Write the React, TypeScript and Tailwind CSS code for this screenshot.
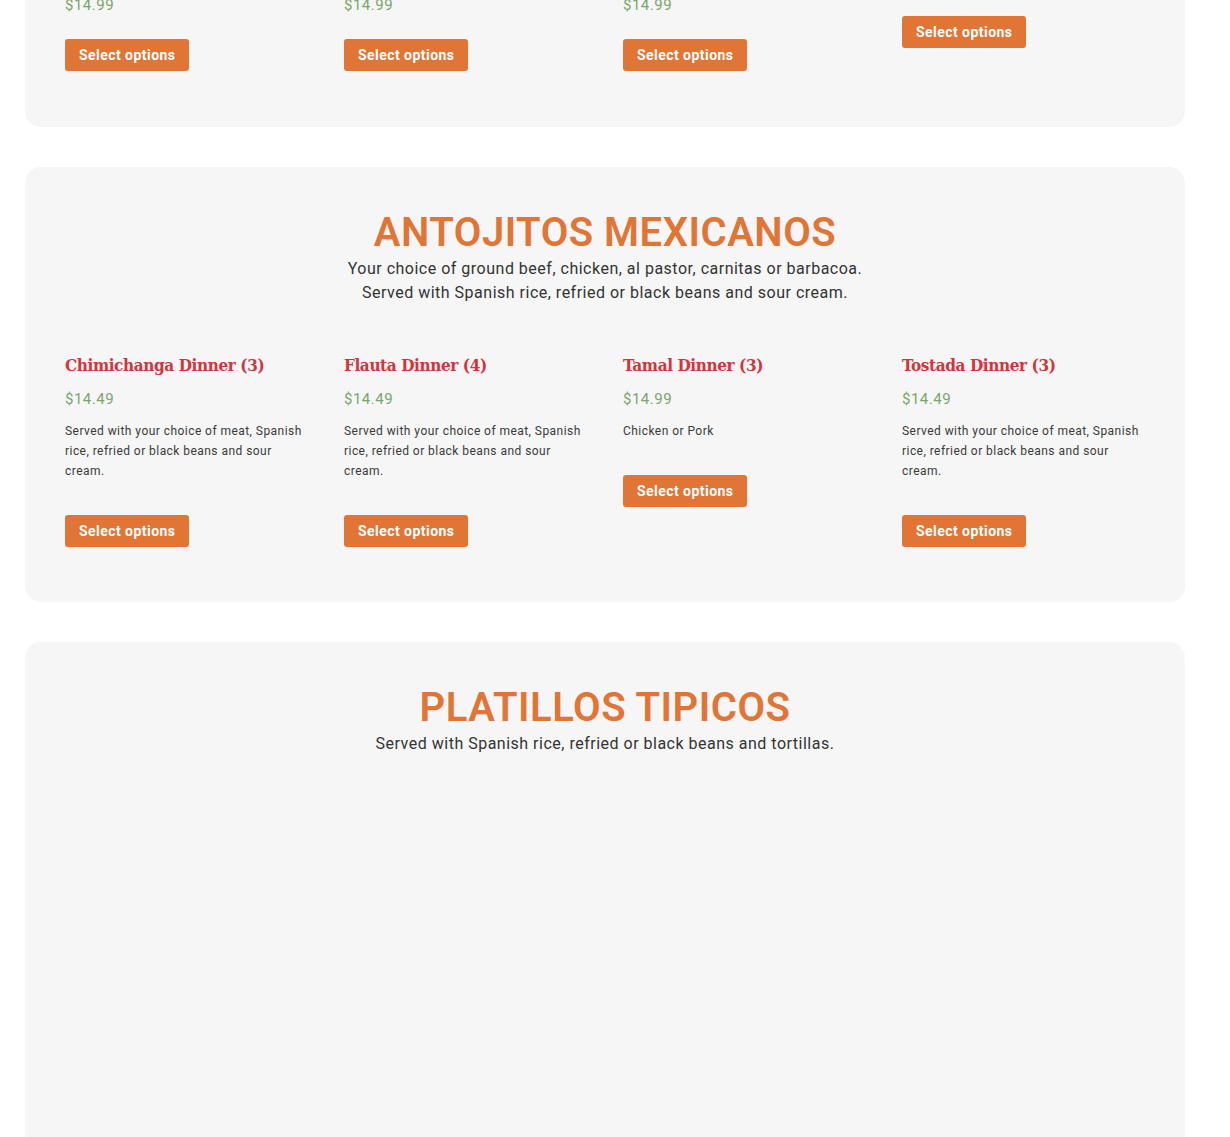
import React from "react";

type Item = { name: string; price: string; desc: string };

const antojitos: Item[] = [
  {
    name: "Chimichanga Dinner (3)",
    price: "$14.49",
    desc: "Served with your choice of meat, Spanish rice, refried or black beans and sour cream.",
  },
  {
    name: "Flauta Dinner (4)",
    price: "$14.49",
    desc: "Served with your choice of meat, Spanish rice, refried or black beans and sour cream.",
  },
  { name: "Tamal Dinner (3)", price: "$14.99", desc: "Chicken or Pork" },
  {
    name: "Tostada Dinner (3)",
    price: "$14.49",
    desc: "Served with your choice of meat, Spanish rice, refried or black beans and sour cream.",
  },
];

function SelectButton() {
  return (
    <button className="h-8 px-[14px] rounded-[3px] bg-[#e07536] text-white text-[14px] font-bold leading-8 tracking-[0.45px] font-['Roboto',sans-serif] w-fit">
      Select options
    </button>
  );
}

function Price({ value }: { value: string }) {
  return <div className="text-[15px] leading-6 tracking-[0.5px] text-[#7aa56c]">{value}</div>;
}

function Card({ item }: { item: Item }) {
  return (
    <div className="flex flex-col">
      <h3 className="font-['DejaVu_Serif',serif] font-stretch-condensed font-bold text-[17px] leading-6 tracking-[-0.4px] text-[#d1343a]">
        {item.name}
      </h3>
      <div className="mt-[10px]">
        <Price value={item.price} />
      </div>
      <p className="mt-[10px] text-[12px] leading-5 tracking-[0.45px] text-[#3a3a3a]">{item.desc}</p>
      <div className="mt-[34px]">
        <SelectButton />
      </div>
    </div>
  );
}

function Section({ title, lines, children }: { title: string; lines: string[]; children?: React.ReactNode }) {
  return (
    <section className="bg-[#f6f6f6] rounded-2xl px-10 pt-[42px] pb-[55px]">
      <h2 className="text-center text-[40px] leading-[48px] font-semibold tracking-[0.5px] text-[#e07536]">{title}</h2>
      <div className="text-center text-[16px] leading-6 tracking-[0.5px] text-[#333]">
        {lines.map((l) => (
          <p key={l}>{l}</p>
        ))}
      </div>
      {children}
    </section>
  );
}

export default function App() {
  return (
    <div className="bg-white min-h-screen overflow-hidden font-['Roboto',sans-serif]">
      <div className="pl-[25px] pr-[45px] flex flex-col gap-10 -mt-[7px]">
        <section className="bg-[#f6f6f6] rounded-b-2xl px-10 pb-[56px]">
          <div className="grid grid-cols-4 gap-x-9 items-start">
            {[0, 1, 2].map((i) => (
              <div key={i} className="flex flex-col">
                <Price value="$14.99" />
                <div className="mt-[22px]">
                  <SelectButton />
                </div>
              </div>
            ))}
            <div className="pt-[23px]">
              <SelectButton />
            </div>
          </div>
        </section>

        <Section
          title="ANTOJITOS MEXICANOS"
          lines={[
            "Your choice of ground beef, chicken, al pastor, carnitas or barbacoa.",
            "Served with Spanish rice, refried or black beans and sour cream.",
          ]}
        >
          <div className="grid grid-cols-4 gap-x-9 mt-[48px] items-start">
            {antojitos.map((it) => (
              <Card key={it.name} item={it} />
            ))}
          </div>
        </Section>

        <Section title="PLATILLOS TIPICOS" lines={["Served with Spanish rice, refried or black beans and tortillas."]}>
          <div className="h-[420px]" />
        </Section>
      </div>
    </div>
  );
}
